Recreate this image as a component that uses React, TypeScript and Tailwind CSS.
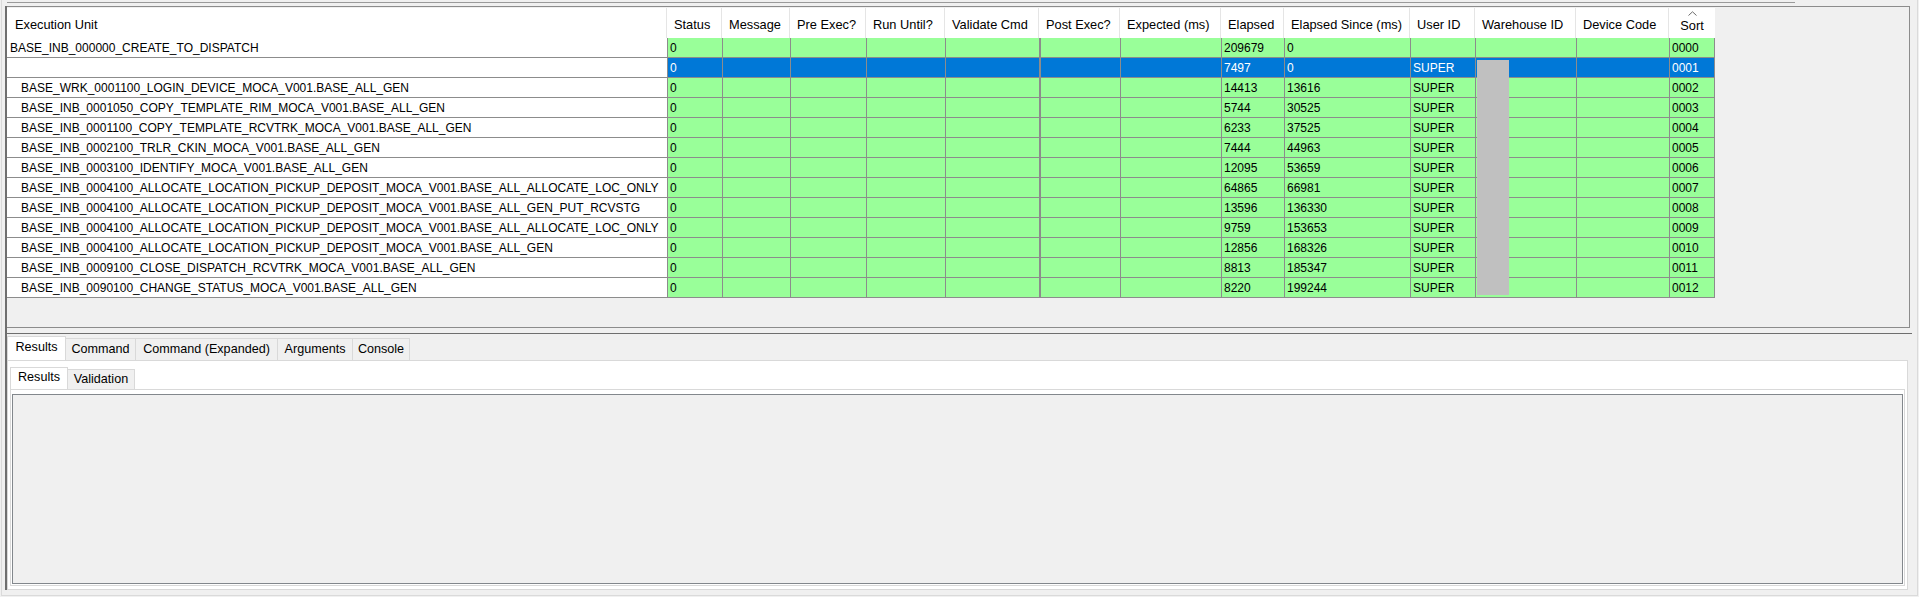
import React from 'react';

type Col = { label: string; w: string };

const cols: Col[] = [
  { label: 'Execution Unit', w: 'w-[660px]' },
  { label: 'Status', w: 'w-[55px]' },
  { label: 'Message', w: 'w-[68px]' },
  { label: 'Pre Exec?', w: 'w-[76px]' },
  { label: 'Run Until?', w: 'w-[79px]' },
  { label: 'Validate Cmd', w: 'w-[94px]' },
  { label: 'Post Exec?', w: 'w-[81px]' },
  { label: 'Expected (ms)', w: 'w-[101px]' },
  { label: 'Elapsed', w: 'w-[63px]' },
  { label: 'Elapsed Since (ms)', w: 'w-[126px]' },
  { label: 'User ID', w: 'w-[65px]' },
  { label: 'Warehouse ID', w: 'w-[101px]' },
  { label: 'Device Code', w: 'w-[93px]' },
  { label: 'Sort', w: 'w-[46px]' },
];

type Row = {
  name: string;
  child: boolean;
  elapsed: string;
  since: string;
  user: string;
  sort: string;
  selected?: boolean;
};

const rows: Row[] = [
  { name: 'BASE_INB_000000_CREATE_TO_DISPATCH', child: false, elapsed: '209679', since: '0', user: '', sort: '0000' },
  { name: '', child: false, elapsed: '7497', since: '0', user: 'SUPER', sort: '0001', selected: true },
  { name: 'BASE_WRK_0001100_LOGIN_DEVICE_MOCA_V001.BASE_ALL_GEN', child: true, elapsed: '14413', since: '13616', user: 'SUPER', sort: '0002' },
  { name: 'BASE_INB_0001050_COPY_TEMPLATE_RIM_MOCA_V001.BASE_ALL_GEN', child: true, elapsed: '5744', since: '30525', user: 'SUPER', sort: '0003' },
  { name: 'BASE_INB_0001100_COPY_TEMPLATE_RCVTRK_MOCA_V001.BASE_ALL_GEN', child: true, elapsed: '6233', since: '37525', user: 'SUPER', sort: '0004' },
  { name: 'BASE_INB_0002100_TRLR_CKIN_MOCA_V001.BASE_ALL_GEN', child: true, elapsed: '7444', since: '44963', user: 'SUPER', sort: '0005' },
  { name: 'BASE_INB_0003100_IDENTIFY_MOCA_V001.BASE_ALL_GEN', child: true, elapsed: '12095', since: '53659', user: 'SUPER', sort: '0006' },
  { name: 'BASE_INB_0004100_ALLOCATE_LOCATION_PICKUP_DEPOSIT_MOCA_V001.BASE_ALL_ALLOCATE_LOC_ONLY', child: true, elapsed: '64865', since: '66981', user: 'SUPER', sort: '0007' },
  { name: 'BASE_INB_0004100_ALLOCATE_LOCATION_PICKUP_DEPOSIT_MOCA_V001.BASE_ALL_GEN_PUT_RCVSTG', child: true, elapsed: '13596', since: '136330', user: 'SUPER', sort: '0008' },
  { name: 'BASE_INB_0004100_ALLOCATE_LOCATION_PICKUP_DEPOSIT_MOCA_V001.BASE_ALL_ALLOCATE_LOC_ONLY', child: true, elapsed: '9759', since: '153653', user: 'SUPER', sort: '0009' },
  { name: 'BASE_INB_0004100_ALLOCATE_LOCATION_PICKUP_DEPOSIT_MOCA_V001.BASE_ALL_GEN', child: true, elapsed: '12856', since: '168326', user: 'SUPER', sort: '0010' },
  { name: 'BASE_INB_0009100_CLOSE_DISPATCH_RCVTRK_MOCA_V001.BASE_ALL_GEN', child: true, elapsed: '8813', since: '185347', user: 'SUPER', sort: '0011' },
  { name: 'BASE_INB_0090100_CHANGE_STATUS_MOCA_V001.BASE_ALL_GEN', child: true, elapsed: '8220', since: '199244', user: 'SUPER', sort: '0012' },
];

function HeaderRow() {
  return (
    <div className="flex h-[30px] text-[12.8px]">
      {cols.map((c, i) =>
        c.label === 'Sort' ? (
          <div key={i} className={`${c.w} h-full bg-white flex flex-col items-center pt-[3px]`}>
            <svg width="9" height="5" viewBox="0 0 9 5" className="block">
              <path d="M0.5 4.5 L4.5 0.8 L8.5 4.5" fill="none" stroke="#6b6b6b" strokeWidth="1" />
            </svg>
            <span className="leading-[14px] mt-[3px]">Sort</span>
          </div>
        ) : (
          <div
            key={i}
            className={`${c.w} h-full bg-white border-r border-[#e5e5e5] flex items-center pt-[3px] whitespace-nowrap ${i === 0 ? 'pl-[8px]' : 'pl-[7px]'}`}
          >
            {c.label}
          </div>
        )
      )}
    </div>
  );
}

function DataRow({ r }: { r: Row }) {
  const values = ['0', '', '', '', '', '', '', r.elapsed, r.since, r.user, '', '', r.sort];
  const bg = r.selected ? 'bg-[#0078d7] text-white' : 'bg-[#99ff99] text-black';
  return (
    <div className="flex h-[20px]">
      <div
        className={`${cols[0].w} h-full bg-white border-b border-[#8c8c8c] flex items-center pt-[1px] whitespace-nowrap overflow-hidden ${r.child ? 'pl-[14px]' : 'pl-[3px]'}`}
      >
        {r.name}
      </div>
      {values.map((v, i) => {
        const col = cols[i + 1];
        const isPost = col.label === 'Post Exec?';
        const isLast = i === values.length - 1;
        return (
          <div
            key={i}
            className={`${col.w} h-full ${bg} border-b border-[#8c8c8c] ${isPost ? 'border-l-2' : 'border-l'} ${isLast ? 'border-r' : ''} flex items-center pt-[1px] pl-[2px] whitespace-nowrap overflow-hidden`}
          >
            {v}
          </div>
        );
      })}
    </div>
  );
}

function Tab({ label, w, selected }: { label: string; w: string; selected?: boolean }) {
  return selected ? (
    <div className={`${w} h-[24px] bg-white border-t border-l border-r border-[#d9d9d9] flex items-center justify-center pb-[3px]`}>
      {label}
    </div>
  ) : (
    <div className={`${w} h-[22px] bg-[#f0f0f0] border-t border-r border-[#d9d9d9] flex items-center justify-center`}>
      {label}
    </div>
  );
}

function InnerTab({ label, w, selected }: { label: string; w: string; selected?: boolean }) {
  return selected ? (
    <div className={`${w} h-[22px] bg-white border-t border-l border-r border-[#d9d9d9] flex items-center justify-center pb-[3px]`}>
      {label}
    </div>
  ) : (
    <div className={`${w} h-[20px] bg-[#f0f0f0] border-t border-r border-[#d9d9d9] flex items-center justify-center`}>
      {label}
    </div>
  );
}

export default function App() {
  return (
    <div className="w-[1919px] h-[597px] bg-[#f0f0f0] overflow-hidden font-['Liberation_Sans',Arial,sans-serif] text-[12px] text-black">
      <div className="ml-[1px] w-[1917px] h-[596px] border-l border-r border-b border-[#dadada] pl-[3px] flex">
        {/* left dark edge */}
        <div className="w-[2px] bg-[#6f6f6f] mt-[6px] mb-[5px] shrink-0" />
        <div className="flex flex-col w-[1906px] shrink-0">
          {/* top strip */}
          <div className="h-[6px] flex flex-col">
            <div className="h-[2px]" />
            <div className="h-[1px] w-[1788px] bg-[#9a9a9a]" />
          </div>
          {/* upper panel */}
          <div className="w-[1903px] h-[322px] border-t border-r border-b border-[#8c8c8c] pt-[1px]">
            <div className="relative w-[1708px]">
              <HeaderRow />
              {rows.map((r, i) => (
                <DataRow key={i} r={r} />
              ))}
              {/* redaction overlay */}
              <div className="absolute left-[1470px] top-[52px] w-[32px] h-[235px] bg-[#c0c0c0]" />
            </div>
          </div>
          <div className="h-[5px]" />
          <div className="h-[1px] w-[1905px] bg-[#6e6e6e]" />
          <div className="h-[2px]" />
          {/* outer tabs */}
          <div className="flex items-end h-[24px] text-[12.6px]">
            <Tab label="Results" w="w-[59px]" selected />
            <Tab label="Command" w="w-[70px]" />
            <Tab label="Command (Expanded)" w="w-[142px]" />
            <Tab label="Arguments" w="w-[75px]" />
            <Tab label="Console" w="w-[57px]" />
          </div>
          {/* tab content */}
          <div className="w-[1901px] h-[230px] bg-white border border-[#d9d9d9] pl-[2px] pt-[6px]">
            <div className="flex items-end h-[22px] text-[12.6px]">
              <InnerTab label="Results" w="w-[58px]" selected />
              <InnerTab label="Validation" w="w-[67px]" />
            </div>
            <div className="w-[1895px] h-[197px] bg-white border border-[#d9d9d9] pl-[1px] pt-[4px]">
              <div className="w-[1891px] h-[190px] border border-[#82878c] bg-[#f0f0f0]" />
            </div>
          </div>
        </div>
      </div>
    </div>
  );
}
